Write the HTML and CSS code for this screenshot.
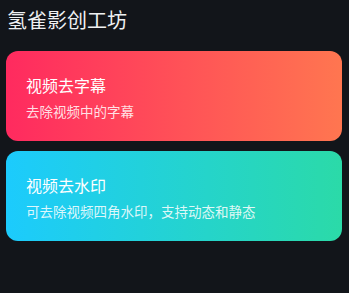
FILE: index.html
```html
<!DOCTYPE html>
<html lang="zh">
<head>
<meta charset="utf-8">
<link rel="stylesheet" href="styles.css">
</head>
<body>
<div class="page">
  <header class="header">氢雀影创工坊</header>
  <div class="cards">
    <div class="card card-red">
      <div class="card-title">视频去字幕</div>
      <div class="card-sub">去除视频中的字幕</div>
    </div>
    <div class="card card-blue">
      <div class="card-title">视频去水印</div>
      <div class="card-sub">可去除视频四角水印，支持动态和静态</div>
    </div>
  </div>
</div>
</body>
</html>
```

FILE: styles.css
```css
html, body {
  margin: 0;
  padding: 0;
  background: #12151a;
  height: 100%;
}
.page {
  padding: 0 7px 0 6px;
  font-family: "Noto Sans CJK SC", "Noto Sans", sans-serif;
  color: #fff;
}
.header {
  height: 40px;
  line-height: 40px;
  font-size: 20px;
  padding-left: 1px;
  color: #eef0f2;
}
.cards {
  margin-top: 11px;
  display: flex;
  flex-direction: column;
  gap: 10px;
}
.card {
  height: 90px;
  box-sizing: border-box;
  border-radius: 12px;
  padding: 23px 0 0 20px;
  display: flex;
  flex-direction: column;
  gap: 5px;
}
.card-red {
  background: linear-gradient(90deg, #ff2a5f 0%, #ff7650 100%);
}
.card-blue {
  background: linear-gradient(90deg, #1ccbfd 0%, #2bdaa8 100%);
}
.card-title {
  font-size: 16px;
  line-height: 22px;
  color: #fff;
}
.card-sub {
  font-size: 13.5px;
  line-height: 20px;
  color: rgba(255, 255, 255, 0.85);
}
```
